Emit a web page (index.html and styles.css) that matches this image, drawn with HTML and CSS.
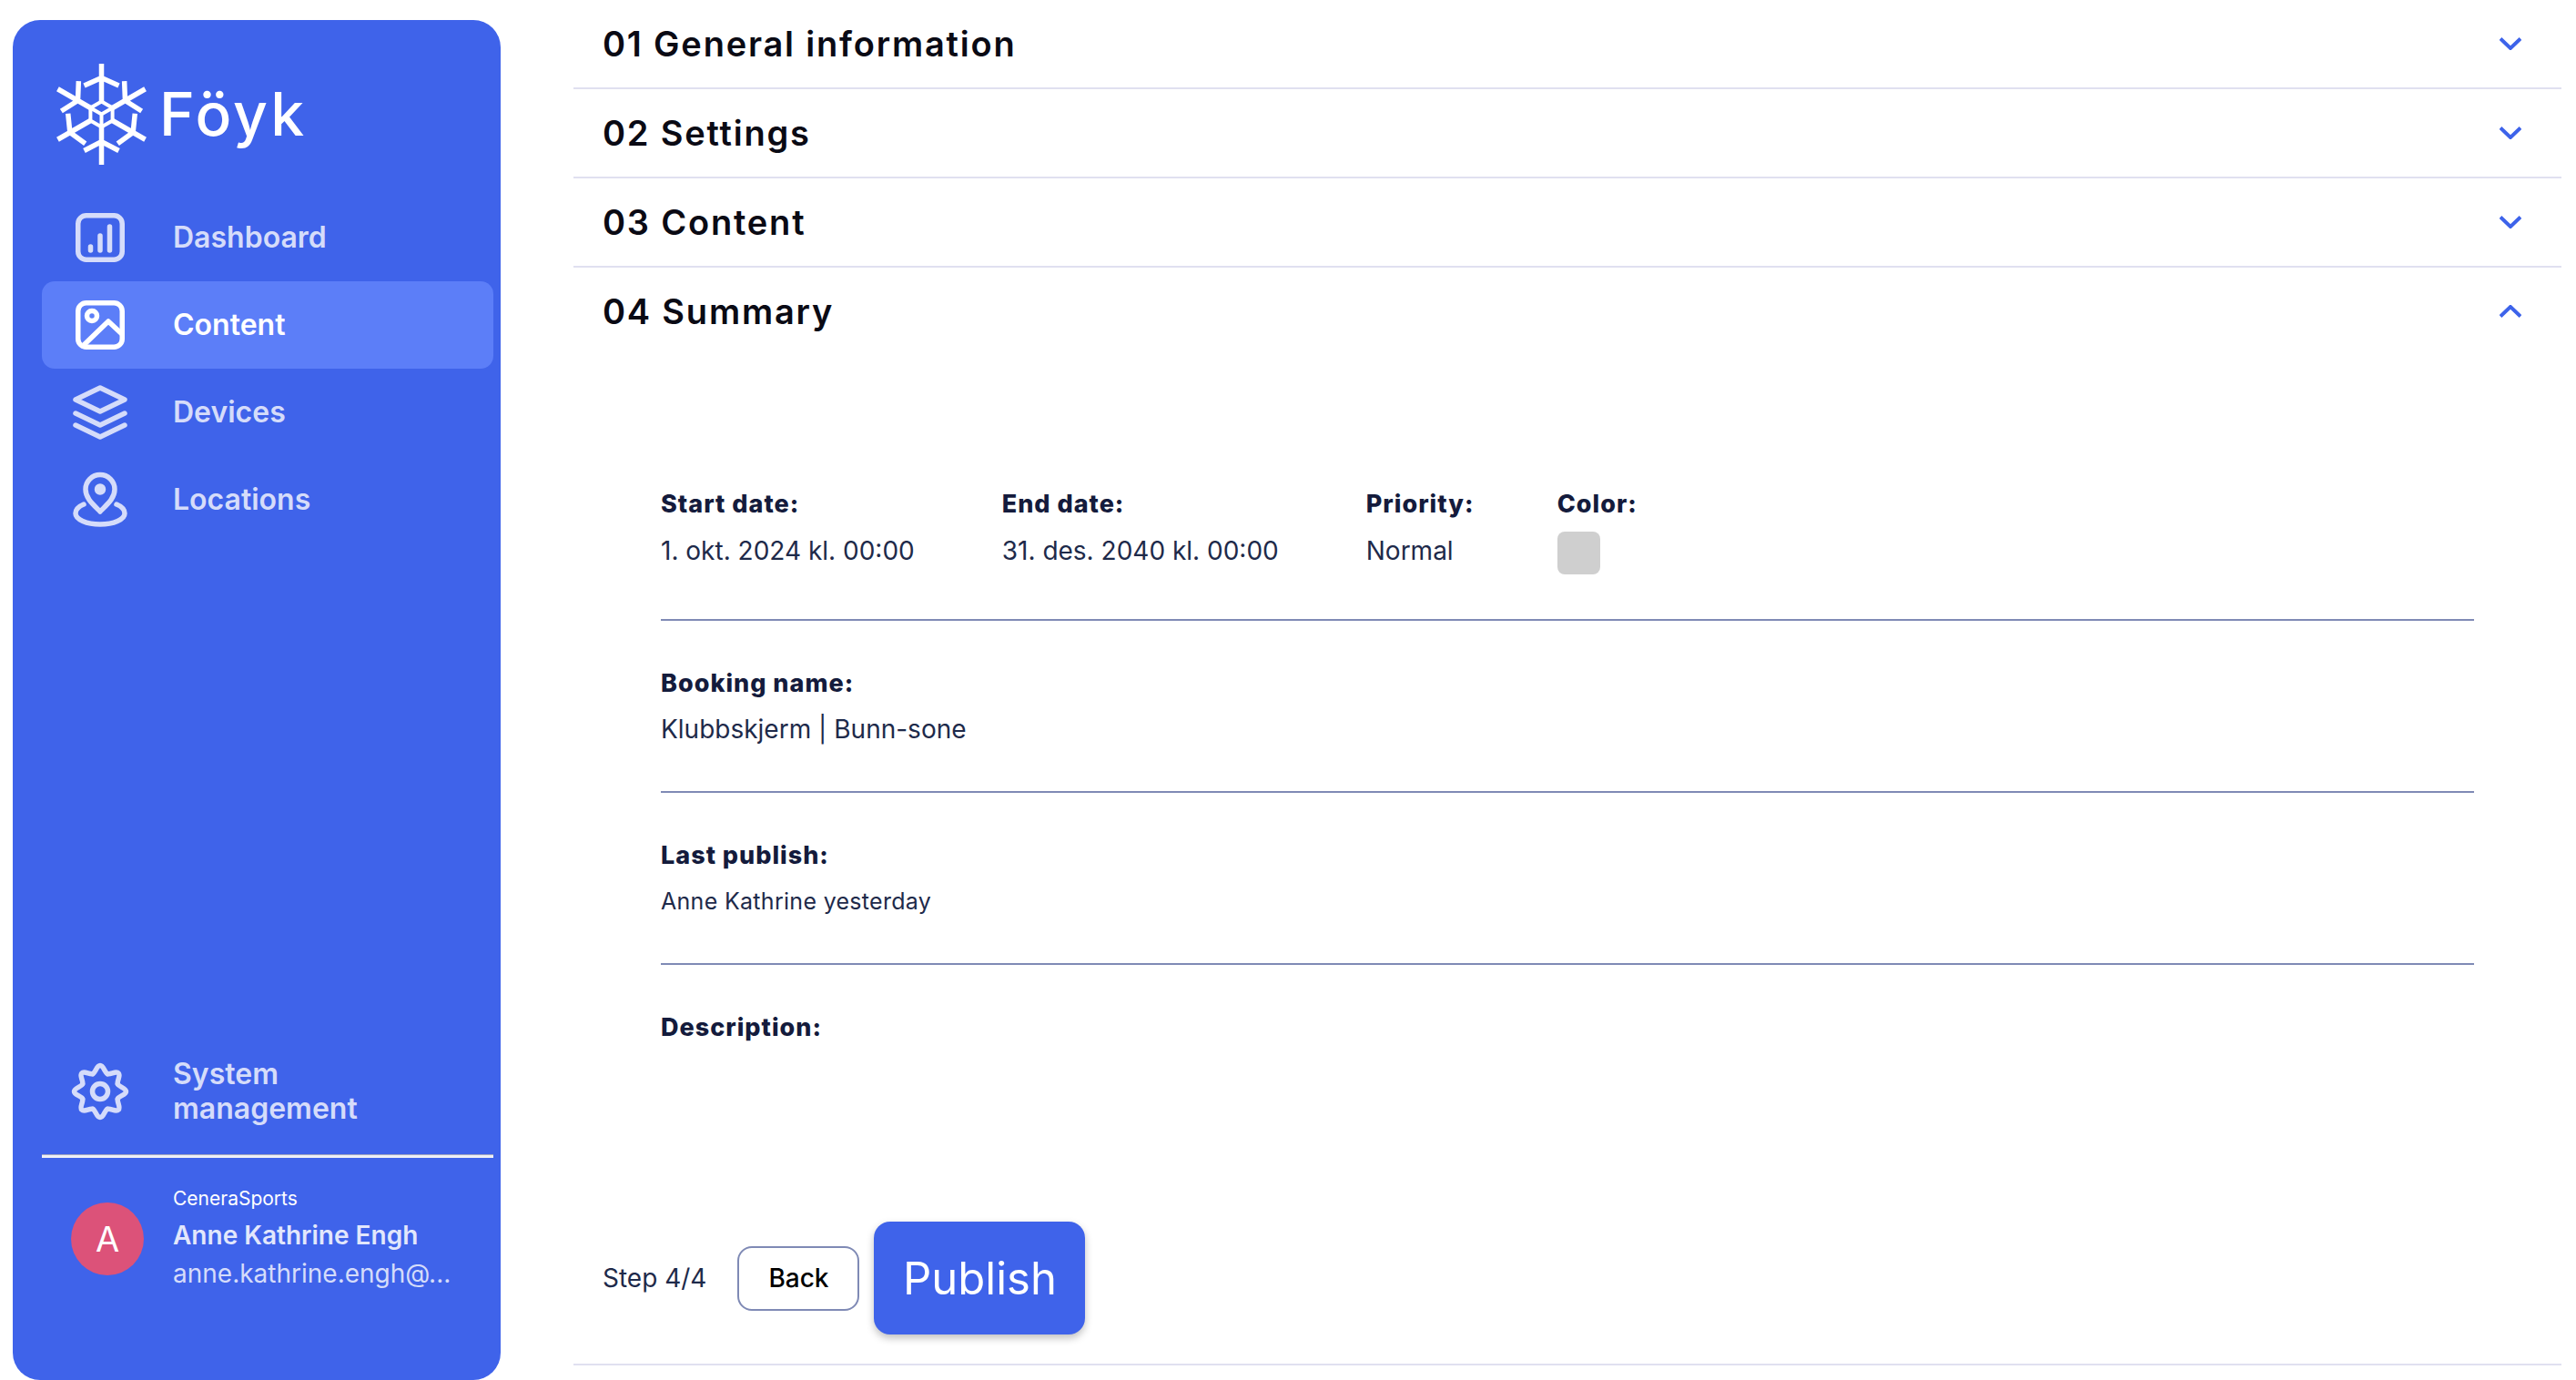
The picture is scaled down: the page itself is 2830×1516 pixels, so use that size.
FILE: index.html
```html
<!DOCTYPE html>
<html lang="en">
<head>
    <meta charset="UTF-8">
    <title>Föyk - Content</title>
    <link rel="stylesheet" href="styles.css">
</head>
<body>
    <aside class="sidebar">
        <div class="logo">
            <svg class="logo-mark" viewBox="0 0 99 111" fill="none" stroke="#fff" stroke-width="5.500">
                <defs>
                    <path id="spoke-in" d="M49.500 42V0M30.500 24l19-8.500 19 8.500"/>
                    <path id="spoke-out" d="M49.500 42V0M30.500 15.500l19 10 19-10"/>
                </defs>
                <use href="#spoke-in"/>
                <use href="#spoke-out" transform="rotate(60 49.500 55.500)"/>
                <use href="#spoke-in" transform="rotate(120 49.500 55.500)"/>
                <use href="#spoke-out" transform="rotate(180 49.500 55.500)"/>
                <use href="#spoke-in" transform="rotate(240 49.500 55.500)"/>
                <use href="#spoke-out" transform="rotate(300 49.500 55.500)"/>
                <path d="M49.500 41.500l12.100 7v14l-12.100 7-12.100-7v-14zM37.400 48.500l12.100 7 12.100-7M49.500 55.500v14" stroke-width="4"/>
            </svg>
            <span class="logo-text">Föyk</span>
        </div>
        <nav class="nav">
            <a class="nav-item">
                <svg class="nav-icon" viewBox="0 0 64 64" fill="none" stroke="currentColor" stroke-width="5.500" stroke-linecap="round">
                    <rect x="7.750" y="7.750" width="48.500" height="48.500" rx="9"/>
                    <path d="M21.500 42v4M32 30v16M42.500 20v26"/>
                </svg>
                <span>Dashboard</span>
            </a>
            <a class="nav-item active">
                <svg class="nav-icon" viewBox="0 0 64 64" fill="none" stroke="currentColor" stroke-width="5.500" stroke-linecap="round" stroke-linejoin="round">
                    <rect x="7.750" y="7.750" width="48.500" height="48.500" rx="9"/>
                    <circle cx="23" cy="22" r="5.500"/>
                    <path d="M13 55l28-27 15 14"/>
                </svg>
                <span>Content</span>
            </a>
            <a class="nav-item">
                <svg class="nav-icon" viewBox="0 0 64 64" fill="none" stroke="currentColor" stroke-width="5.500" stroke-linecap="round" stroke-linejoin="round">
                    <path d="M32 5L59 18 32 31 5 18z"/>
                    <path d="M5 33l27 13 27-13M5 46l27 13 27-13"/>
                </svg>
                <span>Devices</span>
            </a>
            <a class="nav-item">
                <svg class="nav-icon" viewBox="0 0 64 64" fill="none" stroke="currentColor" stroke-width="5.500" stroke-linecap="round" stroke-linejoin="round">
                    <path d="M32 45C23 36 16 30 16 20.500a16 16 0 0 1 32 0C48 30 41 36 32 45z"/>
                    <circle cx="32" cy="20.500" r="3.500" fill="currentColor"/>
                    <path d="M14 37c-6 2.500-9 6-9 10 0 6.500 12 12 27 12s27-5.500 27-12c0-4-3-7.500-9-10"/>
                </svg>
                <span>Locations</span>
            </a>
        </nav>
        <a class="nav-item system">
            <svg class="nav-icon" viewBox="0 0 64 64" fill="none" stroke="currentColor" stroke-width="5.500" stroke-linecap="round">
                <defs>
                    <path id="lobe" d="M23.960 12.600C27.200 11.260 28 3.500 32 3.500S36.800 11.260 40.040 12.600"/>
                </defs>
                <use href="#lobe"/>
                <use href="#lobe" transform="rotate(45 32 32)"/>
                <use href="#lobe" transform="rotate(90 32 32)"/>
                <use href="#lobe" transform="rotate(135 32 32)"/>
                <use href="#lobe" transform="rotate(180 32 32)"/>
                <use href="#lobe" transform="rotate(225 32 32)"/>
                <use href="#lobe" transform="rotate(270 32 32)"/>
                <use href="#lobe" transform="rotate(315 32 32)"/>
                <circle cx="32" cy="32" r="8.500"/>
            </svg>
            <span>System<br>management</span>
        </a>
        <div class="sidebar-divider"></div>
        <div class="user">
            <div class="avatar">A</div>
            <div class="user-info">
                <div class="user-org">CeneraSports</div>
                <div class="user-name">Anne Kathrine Engh</div>
                <div class="user-mail">anne.kathrine.engh@...</div>
            </div>
        </div>
    </aside>

    <main class="main">
        <section class="step">
            <h2>01 General information</h2>
            <svg class="chevron" viewBox="0 0 24 14" fill="none" stroke="#3d63ea" stroke-width="4"><path d="M1 1.500l11 10.500 11-10.500"/></svg>
        </section>
        <section class="step">
            <h2>02 Settings</h2>
            <svg class="chevron" viewBox="0 0 24 14" fill="none" stroke="#3d63ea" stroke-width="4"><path d="M1 1.500l11 10.500 11-10.500"/></svg>
        </section>
        <section class="step">
            <h2>03 Content</h2>
            <svg class="chevron" viewBox="0 0 24 14" fill="none" stroke="#3d63ea" stroke-width="4"><path d="M1 1.500l11 10.500 11-10.500"/></svg>
        </section>
        <section class="step open">
            <h2>04 Summary</h2>
            <svg class="chevron" viewBox="0 0 24 14" fill="none" stroke="#3d63ea" stroke-width="4"><path d="M1 12.500L12 2l11 10.500"/></svg>
        </section>
        <div class="summary">
            <div class="group first dates">
                <div class="field">
                    <div class="label">Start date:</div>
                    <div class="value">1. okt. 2024 kl. 00:00</div>
                </div>
                <div class="field">
                    <div class="label">End date:</div>
                    <div class="value">31. des. 2040 kl. 00:00</div>
                </div>
                <div class="field priority">
                    <div class="label">Priority:</div>
                    <div class="value">Normal</div>
                </div>
                <div class="field">
                    <div class="label">Color:</div>
                    <div class="swatch"></div>
                </div>
            </div>
            <div class="group">
                <div class="label">Booking name:</div>
                <div class="value">Klubbskjerm | Bunn-sone</div>
            </div>
            <div class="group">
                <div class="label">Last publish:</div>
                <div class="value small">Anne Kathrine yesterday</div>
            </div>
            <div class="group last">
                <div class="label">Description:</div>
            </div>
        </div>
        <div class="actions">
            <span class="step-count">Step 4/4</span>
            <button class="button back">Back</button>
            <button class="button publish">Publish</button>
        </div>
    </main>
</body>
</html>
```

FILE: styles.css
```css
* {
    box-sizing: border-box;
}
html, body {
    height: 1516px;
    overflow: hidden;
}
body {
    margin: 0;
    display: flex;
    background: #fff;
    font-family: Inter, "Liberation Sans", sans-serif;
    color: #1e2a4a;
}

/* sidebar */
.sidebar {
    width: 536px;
    height: 1494px;
    margin: 22px 0 0 14px;
    padding: 48px 8px 97px 32px;
    display: flex;
    flex-direction: column;
    flex-shrink: 0;
    background: #3f63ea;
    border-radius: 30px;
}
.logo {
    display: flex;
    align-items: center;
    gap: 14px;
    height: 111px;
    margin: 0 0 32px 16px;
}
.logo-mark {
    width: 99px;
    height: 111px;
}
.logo-text {
    font-size: 66px;
    font-weight: 500;
    letter-spacing: 3px;
    color: #fff;
    margin-top: -2px;
}
.nav {
    display: flex;
    flex-direction: column;
}
.nav-item {
    display: flex;
    align-items: center;
    gap: 48px;
    height: 96px;
    padding-left: 32px;
    border-radius: 14px;
    color: #d5dcfa;
    font-size: 32px;
    font-weight: 600;
    line-height: 38px;
}
.nav-item.active {
    background: #5c7ef8;
    color: #fff;
}
.nav-icon {
    width: 64px;
    height: 64px;
    flex-shrink: 0;
}
.system {
    margin-top: auto;
}
.sidebar-divider {
    height: 4px;
    margin: 21px 0 30px;
    background: #eef0f6;
    border-top: 1px solid #a3a8c0;
}
.user {
    display: flex;
    align-items: center;
    gap: 32px;
    padding-left: 32px;
}
.avatar {
    width: 80px;
    height: 80px;
    flex-shrink: 0;
    display: flex;
    align-items: center;
    justify-content: center;
    border-radius: 50%;
    background: #dc5279;
    color: #fff;
    font-size: 38px;
}
.user-org {
    font-size: 21px;
    line-height: 30px;
    color: #fff;
}
.user-name {
    margin-top: 5px;
    font-size: 28px;
    font-weight: 600;
    line-height: 40px;
    color: #e2e7fc;
}
.user-mail {
    margin-top: 2px;
    font-size: 28px;
    line-height: 40px;
    color: #d5dcfa;
}

/* steps */
.main {
    flex: 1;
    margin: 0 16px 0 80px;
    height: 1500px;
    border-bottom: 2px solid #e0e0f0;
}
.step {
    display: flex;
    align-items: center;
    justify-content: space-between;
    height: 98px;
    padding: 0 44px 0 32px;
    border-bottom: 2px solid #e0e0f0;
}
.step.open {
    border-bottom: none;
    padding-bottom: 2px;
}
.step h2 {
    margin: 0;
    font-size: 38px;
    font-weight: 600;
    letter-spacing: 1.800px;
    color: #0a0a14;
}
.chevron {
    width: 24px;
    height: 14px;
}

/* summary */
.summary {
    padding: 144px 96px 0;
}
.group {
    padding: 51px 0 48px;
    border-bottom: 2px solid #7f8ab5;
}
.group.first {
    padding-top: 0;
    padding-bottom: 49px;
}
.group.first .value {
    margin-top: 13px;
    margin-bottom: -1px;
}
.group.last {
    border-bottom: none;
    padding-bottom: 0;
}
.dates {
    display: flex;
    gap: 96px;
}
.field.priority {
    width: 114px;
}
.label {
    font-size: 27px;
    font-weight: 800;
    letter-spacing: 1px;
    line-height: 36px;
    color: #141b3c;
}
.value {
    margin-top: 12px;
    font-size: 28px;
    line-height: 40px;
    color: #1e2a4a;
}
.value.small {
    font-size: 25px;
    letter-spacing: 0.300px;
}
.swatch {
    width: 47px;
    height: 47px;
    margin-top: 12px;
    border-radius: 8px;
    background: #cfcfcf;
}

/* actions */
.actions {
    display: flex;
    align-items: center;
    margin-top: 195px;
    padding-left: 32px;
}
.step-count {
    font-size: 28px;
    margin-right: 34px;
}
.button {
    font-family: inherit;
    cursor: pointer;
}
.back {
    width: 134px;
    height: 71px;
    margin-right: 16px;
    background: #fff;
    border: 2px solid #7f8ab5;
    border-radius: 16px;
    font-size: 28px;
    font-weight: 500;
    color: #000;
}
.publish {
    width: 232px;
    height: 124px;
    background: #3f63ea;
    border: none;
    border-radius: 18px;
    font-size: 49px;
    color: #fff;
    box-shadow: 0 4px 8px rgba(0,0,0,0.25);
}
```
